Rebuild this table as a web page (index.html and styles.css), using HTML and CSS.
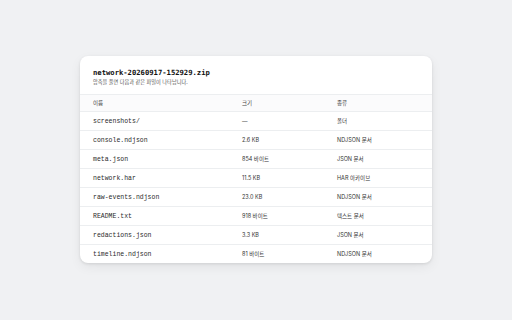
FILE: index.html
```html
<!DOCTYPE html>
<html lang="ko">
<head>
<meta charset="utf-8">
<link rel="stylesheet" href="styles.css">
</head>
<body>
<div class="page">
  <div class="card">
    <div class="head">
      <div class="title">network-20260917-152929.zip</div>
      <div class="sub">압축을 풀면 다음과 같은 파일이 나타납니다.</div>
    </div>
    <div class="row th"><span>이름</span><span>크기</span><span>종류</span></div>
    <div class="row"><span class="mono">screenshots/</span><span>—</span><span>폴더</span></div>
    <div class="row"><span class="mono">console.ndjson</span><span>2.6 KB</span><span>NDJSON 문서</span></div>
    <div class="row"><span class="mono">meta.json</span><span>854 바이트</span><span>JSON 문서</span></div>
    <div class="row"><span class="mono">network.har</span><span>11.5 KB</span><span>HAR 아카이브</span></div>
    <div class="row"><span class="mono">raw-events.ndjson</span><span>23.0 KB</span><span>NDJSON 문서</span></div>
    <div class="row"><span class="mono">README.txt</span><span>918 바이트</span><span>텍스트 문서</span></div>
    <div class="row"><span class="mono">redactions.json</span><span>3.3 KB</span><span>JSON 문서</span></div>
    <div class="row last"><span class="mono">timeline.ndjson</span><span>81 바이트</span><span>NDJSON 문서</span></div>
  </div>
</div>
</body>
</html>
```
FILE: styles.css
```css
html, body { margin: 0; padding: 0; }
body {
  width: 512px; height: 320px; overflow: hidden;
  background: #f0f1f3;
  font-family: "Inter", "Noto Sans CJK KR", sans-serif;
  color: #1f2328;
}
.page { padding: 56px 0 0 80px; }
.card {
  width: 352px;
  background: #fff;
  border-radius: 8px;
  box-shadow: 0 1px 3px rgba(0,0,0,0.10), 0 4px 12px rgba(0,0,0,0.06);
  overflow: hidden;
}
.head { padding: 12px 13px 7px; height: 19px; }
.title {
  font-family: "DejaVu Sans Mono", monospace;
  font-weight: bold; font-size: 7.2px; line-height: 9px; color: #111;
}
.sub { font-size: 5.2px; line-height: 7px; margin-top: 2px; color: #555; }
.row {
  display: grid; grid-template-columns: 149px 95px 1fr;
  padding: 0 13px; height: 19px; align-items: center;
  border-top: 1px solid #eceef0;
  box-sizing: border-box;
  font-size: 5.5px; color: #333;
}
.row.th { height: 17px; background: #fbfbfc; color: #444; }
.mono { font-family: "Liberation Mono", monospace; font-size: 6.5px; color: #2a2a2a; }
```
